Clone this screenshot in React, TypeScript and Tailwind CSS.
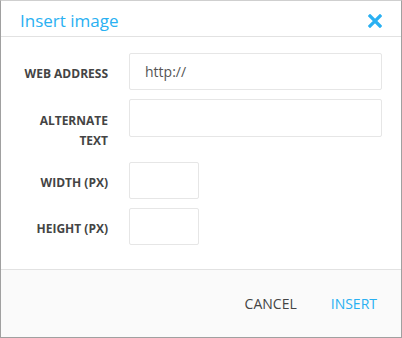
import React from "react";

const font = { fontFamily: '"Open Sans", "Noto Sans", sans-serif' };

function Row({ label, children, lines = 1 }: { label: React.ReactNode; children: React.ReactNode; lines?: number }) {
  return (
    <div className="flex items-start">
      <div
        className={`w-[88px] text-right text-[12px] font-bold leading-[20px] text-[#444] ${lines === 2 ? "pt-[12px] pb-[2px]" : "pt-[11px]"}`}
      >
        {label}
      </div>
      <div className="ml-[21px] flex-1">{children}</div>
    </div>
  );
}

export default function App() {
  return (
    <div style={font} className="w-[402px] h-[338px] bg-white">
      <div className="w-[402px] h-[338px] flex flex-col border border-[#a0a0a0] border-t-[#cfcfcf]">
        <div className="h-[36px] flex items-center justify-between pl-[19px] pr-[19px] border-b border-[#e2e2e2] shrink-0">
          <span className="text-[17px] leading-[24px] text-[#29b0f2] pt-[4px]">Insert image</span>
          <svg width="14" height="14" viewBox="0 0 14 14" className="mt-[5px]">
            <path d="M2 2 L12 12 M12 2 L2 12" stroke="#29b0f2" strokeWidth="3.2" strokeLinecap="square" />
          </svg>
        </div>
        <div className="flex-1 flex flex-col gap-[9px] pt-[16px] pl-[19px] pr-[19px]">
          <Row label="WEB ADDRESS">
            <div className="h-[37px] w-full rounded-[2px] border border-[#e6e6e6] flex items-center pl-[15px] text-[14px] text-[#555]">
              http://
            </div>
          </Row>
          <Row label={<>ALTERNATE<br />TEXT</>} lines={2}>
            <div className="h-[38px] w-full rounded-[2px] border border-[#e6e6e6]" />
          </Row>
          <Row label="WIDTH (PX)">
            <div className="h-[37px] w-[70px] rounded-[2px] border border-[#e6e6e6]" />
          </Row>
          <Row label="HEIGHT (PX)">
            <div className="h-[37px] w-[70px] rounded-[2px] border border-[#e6e6e6]" />
          </Row>
        </div>
        <div className="h-[68px] shrink-0 bg-[#fafafa] border-t border-[#e2e2e2] flex items-center justify-end pr-[24px] gap-[34px]">
          <span className="text-[14px] text-[#444]">CANCEL</span>
          <span className="text-[14px] text-[#29b0f2]">INSERT</span>
        </div>
      </div>
    </div>
  );
}
